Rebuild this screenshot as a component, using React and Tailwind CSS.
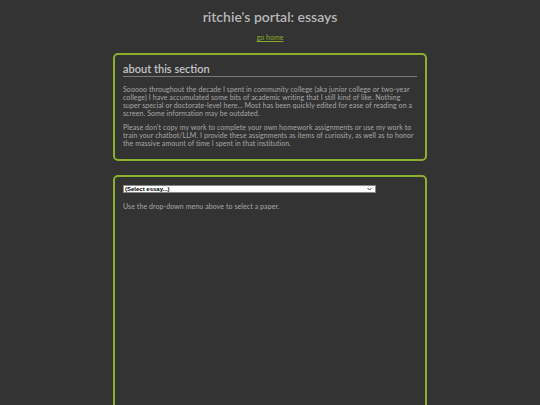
export default function App() {
  return (
    <div className="min-h-screen bg-[#333333] font-['Lato','Open_Sans',sans-serif]">
      <div className="mx-auto w-[314px] pt-[7px]">
        {/* Header */}
        <h1 className="text-center text-[14px] font-semibold leading-[20px] text-[#b8b8b8]">
          ritchie's portal: essays
        </h1>
        <div className="mt-[5px] text-center text-[7px] leading-[10px]">
          <a href="#" className="text-[#8aab2a] underline">go home</a>
        </div>

        {/* About box */}
        <section className="mt-[11px] h-[108px] rounded-[5px] border-2 border-[#8cb02c] px-[8px] pt-[7px]">
          <h2 className="border-b border-[#7a7a7a] text-[11px] font-semibold leading-[14px] text-[#c4c4c4]">
            about this section
          </h2>
          <p className="mt-[8px] text-[7px] leading-[8px] tracking-[0.08px] text-[#a8a8a8]">
            Sooooo throughout the decade I spent in community college (aka junior college or two-year college) I have accumulated some bits of academic writing that I still kind of like. Nothing super special or doctorate-level here... Most has been quickly edited for ease of reading on a screen. Some information may be outdated.
          </p>
          <p className="mt-[6px] text-[7px] leading-[8px] tracking-[0.08px] text-[#a8a8a8]">
            Please don't copy my work to complete your own homework assignments or use my work to train your chatbot/LLM. I provide these assignments as items of curiosity, as well as to honor the massive amount of time I spent in that institution.
          </p>
        </section>

        {/* Essay box */}
        <section className="mt-[14px] h-[260px] rounded-[5px] border-2 border-[#8cb02c] px-[8px] pt-[8px]">
          <div className="flex h-[8px] w-[253px] items-center justify-between border border-[#888] bg-white pl-[1px] pr-[3px] font-['Liberation_Sans',sans-serif] text-[6px] font-bold leading-[6px] text-black">
            <span>(Select essay...)</span>
            <svg width="5" height="4" viewBox="0 0 10 8" fill="none" stroke="#444" strokeWidth="2">
              <path d="M1 2l4 4 4-4" />
            </svg>
          </div>
          <p className="mt-[9px] text-[7px] leading-[8px] tracking-[0.08px] text-[#a8a8a8]">
            Use the drop-down menu above to select a paper.
          </p>
        </section>
      </div>
    </div>
  );
}
